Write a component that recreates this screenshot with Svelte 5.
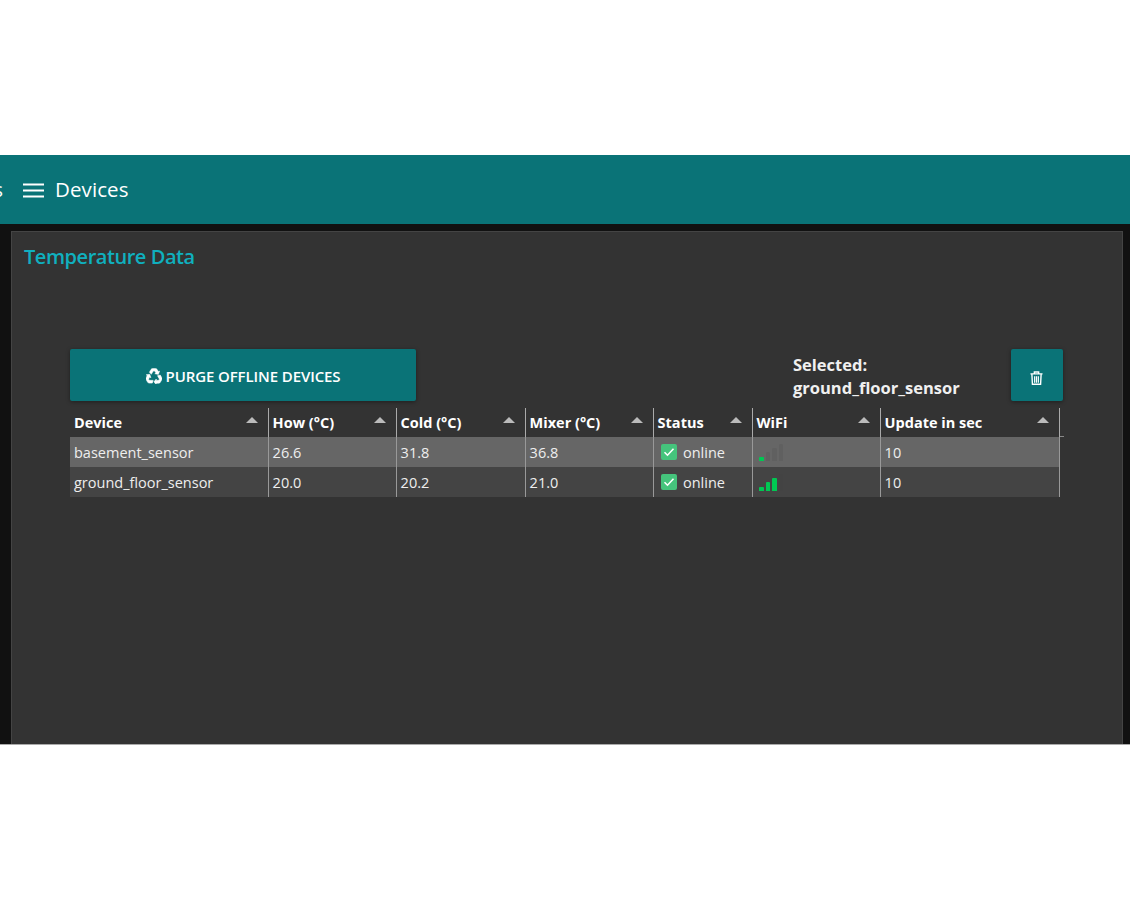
<script lang="ts">
	const columns = [
		{ title: 'Device', width: 199 },
		{ title: 'How (°C)', width: 128 },
		{ title: 'Cold (°C)', width: 129 },
		{ title: 'Mixer (°C)', width: 128 },
		{ title: 'Status', width: 99 },
		{ title: 'WiFi', width: 128 },
		{ title: 'Update in sec', width: 179 }
	];

	const rows = [
		{ device: 'basement_sensor', how: '26.6', cold: '31.8', mixer: '36.8', status: 'online', wifi: 1, update: 10 },
		{ device: 'ground_floor_sensor', how: '20.0', cold: '20.2', mixer: '21.0', status: 'online', wifi: 3, update: 10 }
	];

	const bars = [4.5, 9, 13, 17];
	const gridColumns = columns.map((c) => c.width + 'px').join(' ');
</script>

<div class="page">
	<header class="appbar">
		<span class="clipped">s</span>
		<svg class="menu" viewBox="0 0 21 15" width="21" height="15" aria-hidden="true">
			<path d="M0 1.5h21M0 7.5h21M0 13.5h21" stroke="#fff" stroke-width="2.2" fill="none" />
		</svg>
		<span class="page-title">Devices</span>
	</header>

	<main class="content">
		<section class="panel">
			<h2>Temperature Data</h2>

			<div class="toolbar">
				<button class="purge" type="button">
					<svg viewBox="0 0 16 16" width="16" height="16" aria-hidden="true">
						<g fill="#fff" stroke="#fff" stroke-width="0.5">
							{#each [0, 120, 240] as angle}
								<path
									transform="rotate({angle} 8 8.8)"
									d="M5.3 6.3 7 3.4Q8 1.9 9 3.4L10 5 8.8 5.7 12.4 6.4 13.6 3 12.4 3.6 11 1.3Q10.5.6 9.5.6H6.5Q5.6.6 5 1.4L3.4 4.2Z"
								/>
							{/each}
						</g>
					</svg>
					PURGE OFFLINE DEVICES
				</button>
				<div class="selected">Selected:<br />ground_floor_sensor</div>
				<button class="trash" type="button" aria-label="Delete">
					<svg viewBox="0 0 14 15" width="13" height="14" aria-hidden="true">
						<path fill="none" stroke="#fff" stroke-width="1.5" d="M.5 3h13M4.7 3V1h4.6v2M2 3l.6 11.2h8.8L12 3" />
						<path stroke="#fff" stroke-width="1.3" d="M5 5.5V12.5M7 5.5V12.5M9 5.5V12.5" />
					</svg>
				</button>
			</div>

			<div class="table" style="grid-template-columns: {gridColumns}">
				{#each columns as col}
					<div class="th">
						<span>{col.title}</span>
						<i class="sort"></i>
					</div>
				{/each}

				{#each rows as row, i}
					<div class="row" class:hover={i === 0}>
						<div class="td first">{row.device}</div>
						<div class="td">{row.how}</div>
						<div class="td">{row.cold}</div>
						<div class="td">{row.mixer}</div>
						<div class="td status">
							<svg viewBox="0 0 16 16" width="16" height="16" aria-hidden="true">
								<rect width="16" height="16" rx="2" fill="#45c47c" />
								<path d="M3.5 8.2l3 3 6-6.4" fill="none" stroke="#fff" stroke-width="1.6" />
							</svg>
							{row.status}
						</div>
						<div class="td wifi">
							{#each bars as h, b}
								<i class:on={b < row.wifi} style="height: {h}px"></i>
							{/each}
						</div>
						<div class="td">{row.update}</div>
					</div>
				{/each}
			</div>
		</section>
	</main>

	<div class="bottom"></div>
</div>

<style>
	:global(body) {
		margin: 0;
		background: #fff;
	}

	.page {
		padding-top: 155px;
		font-family: 'Open Sans', 'Noto Sans', sans-serif;
		color: #f2f2f2;
		overflow: hidden;
	}

	.appbar {
		height: 69px;
		background: #0a7377;
		display: flex;
		align-items: center;
		color: #fff;
		font-size: 20.5px;
	}

	.clipped {
		width: 3px;
		margin-right: 20px;
		margin-bottom: 2px;
		overflow: hidden;
		direction: rtl;
	}

	.menu {
		margin-right: 12px;
		margin-top: 2px;
	}

	.page-title {
		margin-left: -1px;
		margin-bottom: 2px;
		letter-spacing: 0.1px;
	}

	.content {
		background: #111;
		padding: 7px 7px 0 11px;
		height: 513px;
		box-sizing: content-box;
	}

	.panel {
		height: 100%;
		box-sizing: border-box;
		background: #333;
		border: 1px solid #444;
		border-bottom: 0;
		padding: 0 59px 0 58px;
	}

	h2 {
		margin: 0 0 0 -46px;
		padding-top: 11px;
		height: 106px;
		box-sizing: content-box;
		font-size: 20px;
		line-height: 28px;
		font-weight: 600;
		letter-spacing: -0.45px;
		color: #10b0bf;
	}

	.toolbar {
		display: flex;
		align-items: center;
		height: 52px;
	}

	button {
		background: #0a7377;
		border: 0;
		border-radius: 2px;
		color: #fff;
		height: 52px;
		padding: 0;
		display: flex;
		align-items: center;
		justify-content: center;
		box-shadow: 0 1px 4px rgba(0, 0, 0, 0.4);
	}

	.purge {
		width: 346px;
		gap: 4px;
		padding-top: 2px;
		font-family: inherit;
		font-size: 15px;
		font-weight: 600;
		letter-spacing: -0.1px;
	}

	.selected {
		margin-left: 377px;
		width: 218px;
		padding-top: 2px;
		font-size: 16.5px;
		line-height: 23px;
		font-weight: 700;
		color: #f0f0f0;
	}

	.trash {
		width: 52px;
		padding: 6px 2px 0 0;
	}

	.table {
		display: grid;
		width: 990px;
		margin-top: 7px;
		font-size: 14.5px;
	}

	.th {
		position: relative;
		height: 29px;
		box-sizing: border-box;
		padding: 5px 5px 0 3.6px;
		border-right: 1px solid #aaa;
		display: flex;
		justify-content: space-between;
		font-weight: 700;
		color: #fff;
		line-height: 19px;
	}

	.th:first-child {
		padding-left: 4px;
	}

	/* tick where the header rule runs past the last column */
	.th:nth-child(7)::after {
		content: '';
		position: absolute;
		right: -5px;
		bottom: 0;
		width: 4px;
		height: 1px;
		background: #888;
	}

	.sort {
		width: 0;
		height: 0;
		margin: 4px 5px 0 0;
		border: 6.5px solid transparent;
		border-top: 0;
		border-bottom: 6px solid #bbb;
	}

	.row {
		display: contents;
	}

	.td {
		height: 30px;
		box-sizing: border-box;
		padding: 0 3.6px;
		display: flex;
		align-items: center;
		background: #444;
		border-right: 1px solid #999;
		color: #eee;
	}

	.td.first {
		padding-left: 4px;
	}

	.row.hover .td {
		background: #666;
	}

	.status {
		padding-left: 7px;
		gap: 6px;
	}

	.wifi {
		align-items: flex-end;
		gap: 2px;
		padding: 0 0 6px 6px;
	}

	.wifi i {
		width: 4.5px;
		background: rgba(60, 60, 60, 0.13);
		border-radius: 1px 1px 0 0;
	}

	.wifi i.on {
		background: #00c853;
	}

	.bottom {
		height: 1px;
		background: #aaa;
	}
</style>
